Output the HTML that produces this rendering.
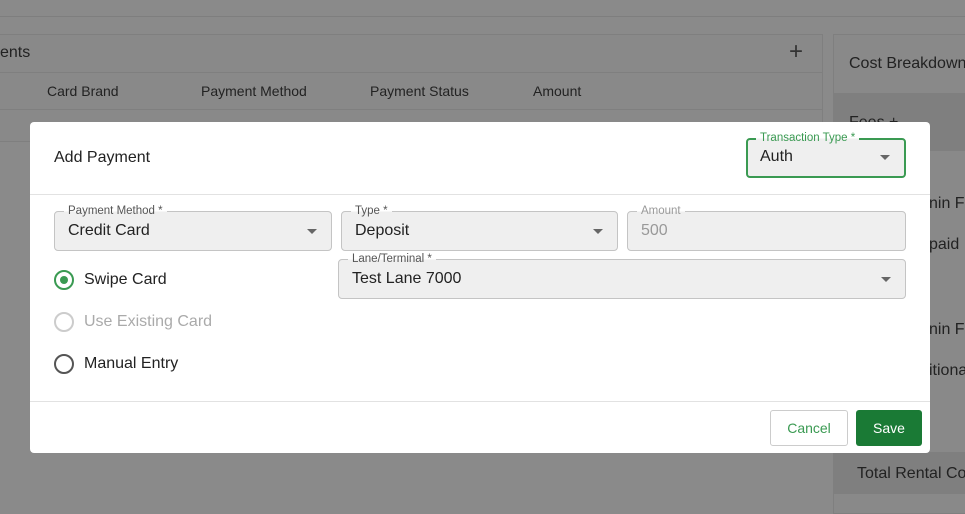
<!DOCTYPE html>
<html><head><style>
*{box-sizing:border-box;margin:0;padding:0}
body{width:965px;height:513px;overflow:hidden;background:#8a8a8a;font-family:"Liberation Sans",sans-serif;position:relative;color:#222}
.a{position:absolute;white-space:nowrap}
.fld{position:absolute;white-space:nowrap;background:#efefef;border:1px solid #c4c4c4;border-radius:4px;font-size:16px;padding-left:13px;line-height:37px}
.lbl{position:absolute;top:-8px;left:9px;font-size:11.5px;line-height:14px;color:#555;background:linear-gradient(#fff 55%,#efefef 55%);padding:0 4px}
.car{position:absolute;right:14px;top:17px;width:0;height:0;border-left:5px solid transparent;border-right:5px solid transparent;border-top:5px solid #666}
.rad{position:absolute;width:20px;height:20px;border:2px solid #555;border-radius:50%}
.rt{position:absolute;font-size:16px;left:84px;white-space:nowrap}
</style></head><body>
<div class="a" style="left:0;top:16px;width:965px;height:1px;background:#7e7e7e"></div>
<div class="a" style="left:-5px;top:34px;width:828px;height:108px;border:1px solid #7f7f7f;background:#898989"></div>
<div class="a" style="left:0;top:72px;width:823px;height:1px;background:#7f7f7f"></div>
<div class="a" style="left:0;top:109px;width:823px;height:1px;background:#7f7f7f"></div>
<div class="a" style="left:0;top:44px;font-size:16px;color:#222">ents</div>
<div class="a" style="left:789px;top:38px;font-size:24px;color:#333">+</div>
<div class="a" style="left:47px;top:83px;font-size:14px;color:#222">Card Brand</div>
<div class="a" style="left:201px;top:83px;font-size:14px;color:#222">Payment Method</div>
<div class="a" style="left:370px;top:83px;font-size:14px;color:#222">Payment Status</div>
<div class="a" style="left:533px;top:83px;font-size:14px;color:#222">Amount</div>
<div class="a" style="left:833px;top:34px;width:140px;height:480px;border:1px solid #7f7f7f;background:#898989"></div>
<div class="a" style="left:834px;top:93px;width:131px;height:58px;background:#7f7f7f"></div>
<div class="a" style="left:834px;top:452px;width:131px;height:42px;background:#7f7f7f"></div>
<div class="a" style="left:849px;top:55px;font-size:16px">Cost Breakdown</div>
<div class="a" style="left:849px;top:114px;font-size:16px">Fees +</div>
<div class="a" style="left:929px;top:195px;font-size:16px">nin Fe</div>
<div class="a" style="left:929px;top:236px;font-size:16px">paid F</div>
<div class="a" style="left:929px;top:321px;font-size:16px">nin Fe</div>
<div class="a" style="left:929px;top:362px;font-size:16px">itiona</div>
<div class="a" style="left:857px;top:465px;font-size:16px">Total Rental Co</div>

<div class="a" style="left:30px;top:122px;width:900px;height:331px;background:#fff;border-radius:4px">
 <div class="a" style="left:24px;top:27px;font-size:16px">Add Payment</div>
 <div class="a" style="left:0;top:72px;width:900px;height:1px;background:#e2e2e2"></div>
 <div class="a" style="left:0;top:279px;width:900px;height:1px;background:#e2e2e2"></div>
</div>
<div class="fld" style="left:746px;top:138px;width:160px;height:40px;border:2px solid #3a9a52;line-height:34px;padding-left:12px">Auth<span class="lbl" style="color:#3a9a52;top:-9px;left:8px">Transaction Type *</span><span class="car" style="top:15px"></span></div>
<div class="fld" style="left:54px;top:211px;width:278px;height:40px">Credit Card<span class="lbl">Payment Method *</span><span class="car"></span></div>
<div class="fld" style="left:341px;top:211px;width:277px;height:40px">Deposit<span class="lbl">Type *</span><span class="car"></span></div>
<div class="fld" style="left:627px;top:211px;width:279px;height:40px;color:#999">500<span class="lbl" style="color:#999">Amount</span></div>
<div class="fld" style="left:338px;top:259px;width:568px;height:40px">Test Lane 7000<span class="lbl">Lane/Terminal *</span><span class="car"></span></div>
<div class="rad" style="left:54px;top:270px;border-color:#3a9a52"><div class="a" style="left:4px;top:4px;width:8px;height:8px;border-radius:50%;background:#3a9a52"></div></div>
<div class="rt" style="top:271px">Swipe Card</div>
<div class="rad" style="left:54px;top:312px;border-color:#ccc"></div>
<div class="rt" style="top:313px;color:#aaa">Use Existing Card</div>
<div class="rad" style="left:54px;top:354px"></div>
<div class="rt" style="top:355px">Manual Entry</div>
<div class="a" style="left:770px;top:410px;width:78px;height:36px;border:1px solid #ccc;border-radius:3px;color:#3a9a52;font-size:14px;text-align:center;line-height:34px">Cancel</div>
<div class="a" style="left:856px;top:410px;width:66px;height:36px;background:#1a7a35;border-radius:3px;color:#fff;font-size:14px;text-align:center;line-height:36px">Save</div>
</body></html>
